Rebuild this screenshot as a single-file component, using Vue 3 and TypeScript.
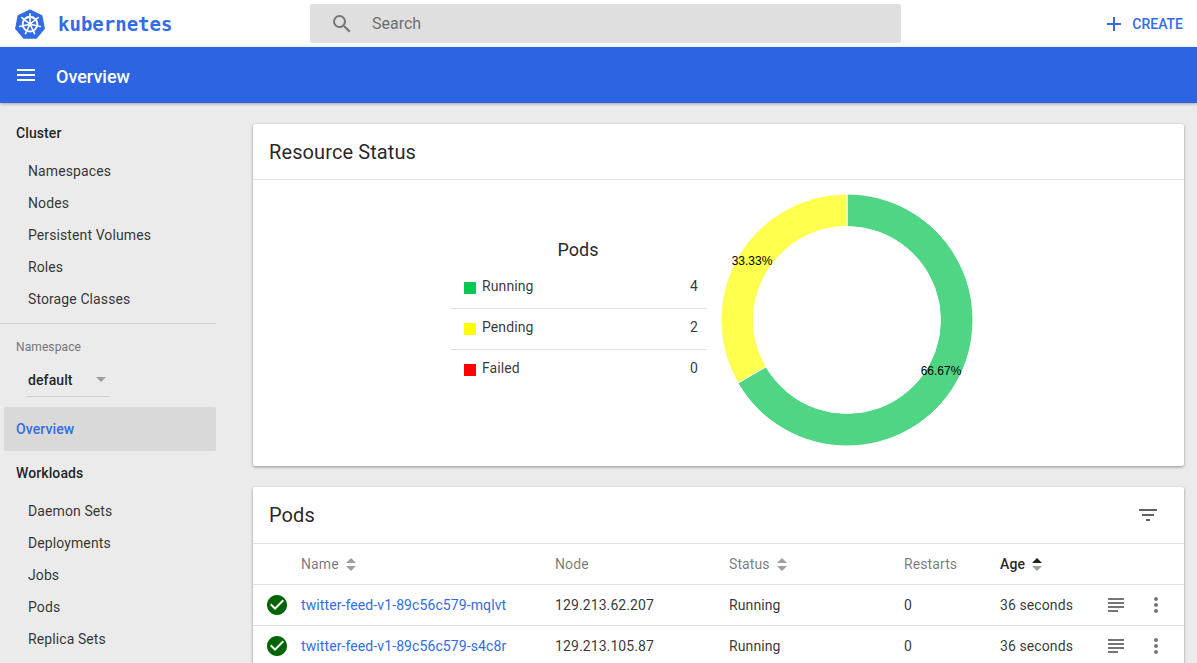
<script setup lang="ts">
interface Row {
  name: string
  node: string
}

const clusterLinks = ['Namespaces', 'Nodes', 'Persistent Volumes', 'Roles', 'Storage Classes']
const workloadLinks = ['Daemon Sets', 'Deployments', 'Jobs', 'Pods', 'Replica Sets']

const legend = [
  { label: 'Running', count: 4, color: '#00c853' },
  { label: 'Pending', count: 2, color: '#ffff00' },
  { label: 'Failed', count: 0, color: '#ff0000' },
]

const rows: Row[] = [
  { name: 'twitter-feed-v1-89c56c579-mqlvt', node: '129.213.62.207' },
  { name: 'twitter-feed-v1-89c56c579-s4c8r', node: '129.213.105.87' },
]

// donut slices, angles are clockwise from 12 o'clock
const point = (r: number, deg: number) => {
  const a = ((deg - 90) * Math.PI) / 180
  return `${(126 + r * Math.cos(a)).toFixed(2)} ${(126 + r * Math.sin(a)).toFixed(2)}`
}
const slice = (from: number, to: number) => {
  const large = to - from > 180 ? 1 : 0
  return `M${point(126, from)} A126 126 0 ${large} 1 ${point(126, to)} L${point(93.5, to)} A93.5 93.5 0 ${large} 0 ${point(93.5, from)} Z`
}
const greenSlice = slice(0, 240)
const yellowSlice = slice(240, 360)

const spokes = [0, 51.43, 102.86, 154.29, 205.71, 257.14, 308.57]
</script>

<template>
  <div class="page">
    <header class="topbar">
      <div class="brand">
        <svg class="logo" viewBox="0 0 32 32" width="30" height="30">
          <path d="M16 1.2 28.6 7.2 31.2 20.8 22.6 31H9.4L.8 20.8 3.4 7.2Z" fill="#326ce5" stroke="#326ce5" stroke-width="1.4" stroke-linejoin="round" />
          <circle cx="16" cy="16.2" r="7.8" fill="none" stroke="#fff" stroke-width="2.2" />
          <g stroke="#fff" stroke-width="1.7" stroke-linecap="round">
            <line v-for="deg in spokes" :key="deg" x1="16" y1="16.2" x2="16" y2="5" :transform="`rotate(${deg} 16 16.2)`" />
          </g>
          <circle cx="16" cy="16.2" r="2.2" fill="#fff" />
        </svg>
        <span class="wordmark">kubernetes</span>
      </div>
      <div class="search">
        <svg viewBox="0 0 24 24" width="24" height="24" fill="#757575">
          <path d="M15.5 14h-.79l-.28-.27A6.47 6.47 0 0 0 16 9.5 6.5 6.5 0 1 0 9.5 16c1.61 0 3.09-.59 4.23-1.57l.27.28v.79l5 4.99L20.49 19l-4.99-5zm-6 0C7.01 14 5 11.99 5 9.5S7.01 5 9.5 5 14 7.01 14 9.5 11.99 14 9.5 14z" />
        </svg>
        <span class="search-text">Search</span>
      </div>
      <div class="create">
        <svg viewBox="0 0 24 24" width="24" height="24" fill="#326de6">
          <path d="M19 13h-6v6h-2v-6H5v-2h6V5h2v6h6v2z" />
        </svg>
        <span>CREATE</span>
      </div>
    </header>

    <div class="titlebar">
      <svg viewBox="0 0 24 24" width="24" height="24" fill="#fff">
        <path d="M3 18h18v-2H3v2zm0-5h18v-2H3v2zm0-7v2h18V6H3z" />
      </svg>
      <span class="title">Overview</span>
    </div>

    <div class="body">
      <nav class="sidebar">
        <div class="nav-head">Cluster</div>
        <a v-for="link in clusterLinks" :key="link" class="nav-link">{{ link }}</a>
        <div class="nav-rule"></div>
        <div class="ns-label">Namespace</div>
        <div class="ns-select">
          <span>default</span>
          <i class="ns-caret"></i>
        </div>
        <div class="nav-active">Overview</div>
        <div class="nav-head nav-head-work">Workloads</div>
        <a v-for="link in workloadLinks" :key="link" class="nav-link">{{ link }}</a>
      </nav>

      <main class="content">
        <section class="card">
          <div class="card-head status-head"><h2>Resource Status</h2></div>
          <div class="status">
            <div class="legend">
              <div class="legend-title">Pods</div>
              <div v-for="item in legend" :key="item.label" class="legend-row">
                <i class="swatch" :style="{ background: item.color }"></i>
                <span class="legend-label">{{ item.label }}</span>
                <span>{{ item.count }}</span>
              </div>
            </div>
            <svg class="donut" viewBox="0 0 252 252" width="252" height="252">
              <path :d="greenSlice" fill="#4fd583" stroke="#fff" stroke-width="1" />
              <path :d="yellowSlice" fill="#ffff4d" stroke="#fff" stroke-width="1" />
              <text x="31" y="71" text-anchor="middle">33.33%</text>
              <text x="220" y="181" text-anchor="middle">66.67%</text>
            </svg>
          </div>
        </section>

        <section class="card">
          <div class="card-head pods-head">
            <h2>Pods</h2>
            <svg viewBox="0 0 24 24" width="24" height="24" fill="#616161">
              <path d="M10 18h4v-2h-4v2zM3 6v2h18V6H3zm3 7h12v-2H6v2z" />
            </svg>
          </div>
          <div class="table">
            <div class="tr th">
              <span class="c-state"></span>
              <span class="c-name">Name <i class="sort"></i></span>
              <span class="c-node">Node</span>
              <span class="c-status">Status <i class="sort"></i></span>
              <span class="c-restarts">Restarts</span>
              <span class="c-age age-head">Age <i class="sort sort-asc"></i></span>
              <span class="c-actions"></span>
            </div>
            <div v-for="row in rows" :key="row.name" class="tr">
              <span class="c-state">
                <svg viewBox="0 0 24 24" width="24" height="24" fill="#006400">
                  <path d="M12 2C6.48 2 2 6.48 2 12s4.48 10 10 10 10-4.48 10-10S17.52 2 12 2zm-2 15-5-5 1.41-1.41L10 14.17l7.59-7.59L19 8l-9 9z" />
                </svg>
              </span>
              <a class="c-name pod-link">{{ row.name }}</a>
              <span class="c-node">{{ row.node }}</span>
              <span class="c-status">Running</span>
              <span class="c-restarts">0</span>
              <span class="c-age">36 seconds</span>
              <span class="c-actions">
                <svg viewBox="0 0 24 24" width="24" height="24" fill="#757575">
                  <path d="M14 17H4v2h10v-2zm6-8H4v2h16V9zM4 15h16v-2H4v2zM4 5v2h16V5H4z" />
                </svg>
                <svg viewBox="0 0 24 24" width="24" height="24" fill="#757575">
                  <path d="M12 8c1.1 0 2-.9 2-2s-.9-2-2-2-2 .9-2 2 .9 2 2 2zm0 2c-1.1 0-2 .9-2 2s.9 2 2 2 2-.9 2-2-.9-2-2-2zm0 6c-1.1 0-2 .9-2 2s.9 2 2 2 2-.9 2-2-.9-2-2-2z" />
                </svg>
              </span>
            </div>
          </div>
        </section>
      </main>
    </div>
  </div>
</template>

<style>
html,
body {
  margin: 0;
  height: 100%;
  overflow: hidden;
}
</style>

<style scoped>
.page {
  height: 663px;
  overflow: hidden;
  display: flex;
  flex-direction: column;
  background: #ebebeb;
  font-family: Roboto, "Liberation Sans", sans-serif;
  font-size: 14px;
  letter-spacing: 0.1px;
  color: rgba(0, 0, 0, 0.87);
}

.topbar {
  flex: none;
  height: 47px;
  display: flex;
  align-items: center;
  background: #fff;
}

.brand {
  width: 310px;
  display: flex;
  align-items: center;
  gap: 13px;
  padding-left: 15px;
  box-sizing: border-box;
}

.wordmark {
  font-family: "DejaVu Sans Mono", monospace;
  font-weight: 700;
  font-size: 19px;
  letter-spacing: 0;
  color: #326de6;
}

.search {
  width: 591px;
  height: 39px;
  display: flex;
  align-items: center;
  gap: 18px;
  padding-left: 20px;
  box-sizing: border-box;
  background: #dfdfdf;
  border-radius: 2px;
}

.search-text {
  font-size: 16px;
  letter-spacing: 0;
  color: #6f6f6f;
}

.create {
  margin-left: auto;
  display: flex;
  align-items: center;
  gap: 6px;
  padding-right: 14px;
  font-weight: 500;
  letter-spacing: 0;
  color: #326de6;
}

.titlebar {
  flex: none;
  height: 56px;
  display: flex;
  align-items: center;
  gap: 18px;
  padding-left: 14px;
  background: #2c64e2;
  color: #fff;
  box-shadow: 0 1px 3px rgba(0, 0, 0, 0.3);
  position: relative;
}

.title {
  font-size: 18px;
  font-weight: 500;
  letter-spacing: 0;
  margin-top: 2px;
}

.body {
  flex: 1;
  min-height: 0;
  display: flex;
}

.sidebar {
  flex: none;
  width: 216px;
  padding-top: 14px;
  box-sizing: border-box;
}

.nav-head {
  height: 32px;
  line-height: 32px;
  padding-left: 16px;
  font-weight: 500;
  margin-bottom: 6px;
}

.nav-head-work {
  margin: 6px 0 6px;
}

.nav-link {
  display: block;
  height: 32px;
  line-height: 32px;
  padding-left: 28px;
  color: rgba(0, 0, 0, 0.8);
}

.nav-rule {
  height: 1px;
  margin-top: 8px;
  background: #cfcfcf;
}

.ns-label {
  margin: 16px 0 0 16px;
  font-size: 12px;
  color: #757575;
}

.ns-select {
  width: 83px;
  height: 34px;
  margin: 9px 0 10px 26px;
  display: flex;
  align-items: center;
  justify-content: space-between;
  padding: 0 2px;
  box-sizing: border-box;
  border-bottom: 1px solid #cfcfcf;
  font-weight: 500;
}

.ns-caret {
  width: 0;
  height: 0;
  border-left: 5px solid transparent;
  border-right: 5px solid transparent;
  border-top: 5px solid #9e9e9e;
  margin-right: 1px;
}

.nav-active {
  height: 44px;
  line-height: 44px;
  margin-left: 4px;
  padding-left: 12px;
  background: #d9d9d9;
  border-radius: 2px;
  color: #326de6;
  font-weight: 500;
}

.content {
  flex: 1;
  min-width: 0;
  padding: 21px 13px 0 37px;
  display: flex;
  flex-direction: column;
  gap: 21px;
}

.card {
  flex: none;
  background: #fff;
  border-radius: 2px;
  box-shadow: 0 1px 3px rgba(0, 0, 0, 0.4);
}

.card-head {
  height: 56px;
  display: flex;
  align-items: center;
  justify-content: space-between;
  padding: 0 24px 0 16px;
  border-bottom: 1px solid #e0e0e0;
}

.status-head {
  height: 55px;
}

.card-head h2 {
  margin: 0;
  font-size: 20px;
  font-weight: 400;
  letter-spacing: 0.1px;
}

.status {
  height: 286px;
  display: flex;
  align-items: center;
  padding-left: 198px;
  gap: 14px;
}

.legend {
  width: 256px;
  margin-top: -18px;
}

.legend-title {
  font-size: 18px;
  letter-spacing: 0;
  text-align: center;
  height: 26px;
  line-height: 26px;
  padding-right: 2px;
  margin-bottom: 5px;
}

.legend-row {
  height: 41px;
  display: flex;
  align-items: center;
  box-sizing: border-box;
  padding: 0 9px 4px 13px;
  border-bottom: 1px solid #e0e0e0;
  color: rgba(0, 0, 0, 0.8);
}

.legend-row:last-child {
  border-bottom-color: transparent;
}

.swatch {
  width: 12px;
  height: 12px;
  margin: 3px 6px 0 0;
}

.legend-label {
  flex: 1;
}

.donut {
  flex: none;
  margin-top: -6px;
}

.donut text {
  font-family: "Liberation Sans", sans-serif;
  font-size: 12px;
  letter-spacing: 0;
  fill: #000;
}

.tr {
  height: 41px;
  display: flex;
  align-items: center;
  box-sizing: border-box;
  border-bottom: 1px solid #e0e0e0;
  color: rgba(0, 0, 0, 0.8);
}

.th {
  color: rgba(0, 0, 0, 0.54);
}

.th span {
  display: flex;
  align-items: center;
  gap: 7px;
}

.c-state {
  width: 48px;
  padding-left: 12px;
  box-sizing: border-box;
  display: flex;
}

.c-name {
  width: 254px;
}

.c-node {
  width: 174px;
}

.c-status {
  width: 175px;
}

.c-restarts {
  width: 96px;
}

.c-age {
  width: 104px;
}

.th .age-head {
  color: rgba(0, 0, 0, 0.87);
  font-weight: 500;
}

.c-actions {
  display: flex;
  gap: 16px;
}

.pod-link {
  color: #326de6;
}

.sort {
  position: relative;
  display: inline-block;
  width: 10px;
  height: 13px;
}

.sort::before,
.sort::after {
  content: "";
  position: absolute;
  left: 0;
  border-left: 5px solid transparent;
  border-right: 5px solid transparent;
}

.sort::before {
  top: 0;
  border-bottom: 5px solid #9e9e9e;
}

.sort::after {
  bottom: 0;
  border-top: 5px solid #9e9e9e;
}

.sort-asc::before {
  border-bottom-color: #212121;
}
</style>
